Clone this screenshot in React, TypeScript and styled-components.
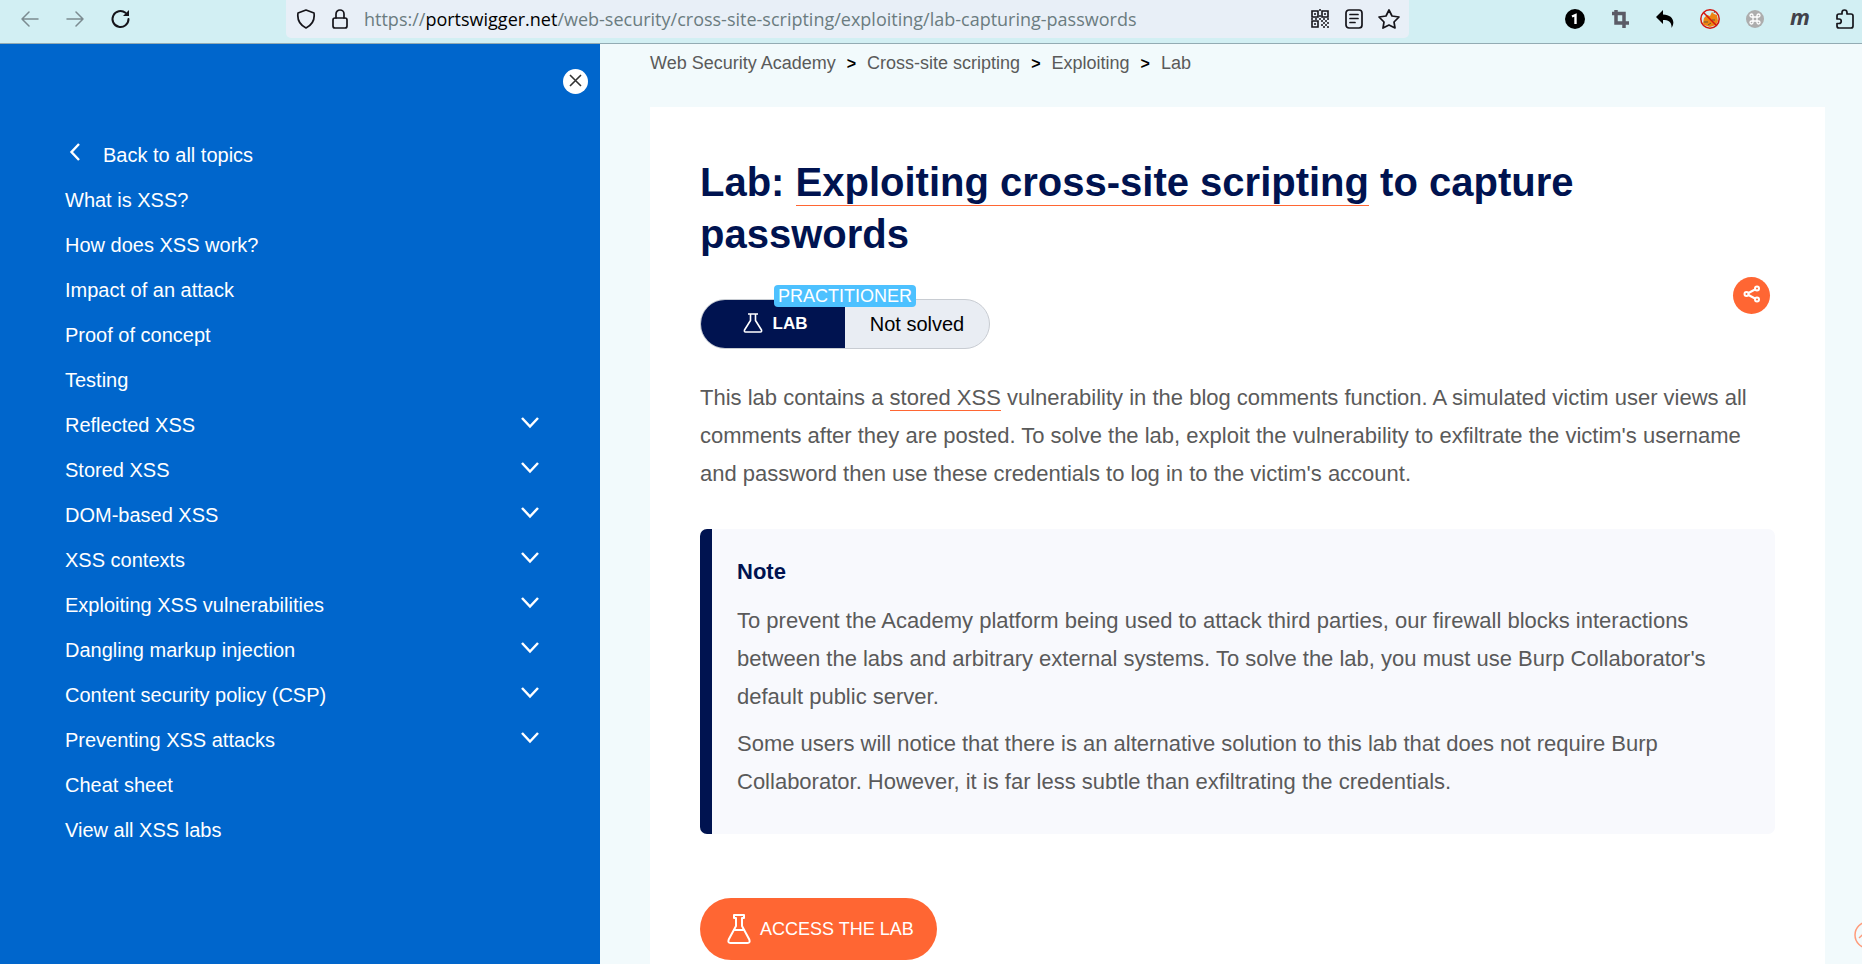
import React from "react";
import styled, { createGlobalStyle } from "styled-components";

const navy = "#001350";
const orange = "#ff6633";

const GlobalStyle = createGlobalStyle`
  * { box-sizing: border-box; }
  body { margin: 0; background: #f2fafc; font-family: "Liberation Sans", Arial, sans-serif; color: #5a5a5a; }
  h1, h2, p, ul, ol { margin: 0; padding: 0; }
  a { color: inherit; text-decoration: none; }
  button { font: inherit; cursor: pointer; }
  svg { display: block; flex: none; }
`;

const Page = styled.div`
  position: relative;
  display: flex;
  flex-direction: column;
  min-height: 100vh;
  overflow: hidden;
`;

const Toolbar = styled.header`
  display: grid;
  grid-template-columns: minmax(0, 286fr) minmax(0, 1123fr) minmax(0, 453fr);
  height: 44px;
  background: #d2eff3;
  border-bottom: 1px solid #93abb3;
  color: #15141a;
`;

const HistoryButtons = styled.div`
  display: flex;
  align-items: center;
  gap: 25px;
  height: 38px;
  padding-left: 20px;
`;

const ToolButton = styled.button<{ $dim?: boolean }>`
  display: flex;
  flex: none;
  padding: 0;
  border: 0;
  background: none;
  color: inherit;
  opacity: ${(p) => (p.$dim ? 0.45 : 1)};
`;

const AddressBar = styled.div`
  display: flex;
  align-items: center;
  gap: 14px;
  height: 38px;
  padding: 0 9px 0 10px;
  background: #e8eff7;
  border-radius: 0 0 5px 5px;
`;

const Address = styled.div`
  flex: 1;
  overflow: hidden;
  font: 18px/24px "Open Sans", "Noto Sans", sans-serif;
  white-space: nowrap;
  color: #6b7c80;
  b { font-weight: 400; color: #000; }
`;

const Extensions = styled.div`
  display: flex;
  align-items: center;
  justify-content: flex-end;
  gap: 25px;
  height: 38px;
  padding-right: 7px;
`;

const MIcon = styled.span`
  width: 20px;
  height: 20px;
  font: italic 700 22px/15px "Open Sans", sans-serif;
  color: #42424a;
`;

const Body = styled.div`
  display: flex;
  flex: 1;
`;

const Sidebar = styled.aside`
  display: flex;
  flex: none;
  flex-direction: column;
  width: 600px;
  padding: 25px 12px 0 0;
  background: #0066cc;
  color: #fff;
`;

const CloseButton = styled.button`
  display: flex;
  align-self: flex-end;
  align-items: center;
  justify-content: center;
  width: 25px;
  height: 25px;
  padding: 0 0 2px;
  border: 0;
  border-radius: 50%;
  background: #fff;
  color: #333;
`;

const TopicList = styled.ul`
  margin: 38px 49px 0 65px;
  list-style: none;
`;

const Topic = styled.a`
  display: flex;
  align-items: center;
  height: 45px;
  font-size: 20px;
  line-height: 24px;
`;

const TopicRow = styled.li`
  display: flex;
  align-items: center;
  justify-content: space-between;
`;

const BackIcon = styled.span`
  width: 38px;
  padding: 0 0 6px 4px;
`;

const ExpandButton = styled.button`
  padding: 0 0 4px;
  border: 0;
  background: none;
  color: #fff;
`;

const Main = styled.main`
  display: flex;
  flex: 1;
  flex-direction: column;
  min-width: 0;
  padding: 7px 37px 0 50px;
`;

const Crumbs = styled.ol`
  display: flex;
  list-style: none;
  font-size: 18px;
  line-height: 24px;
  li + li::before { content: ">"; padding: 0 11px; color: #000; font-weight: 700; font-size: 16px; }
`;

const Card = styled.article`
  flex: 1;
  margin-top: 31px;
  padding: 49px 50px 5px;
  background: #fff;
`;

const Title = styled.h1`
  max-width: 960px;
  font-size: 40px;
  line-height: 52px;
  color: ${navy};
`;

const Underlined = styled.a`
  border-bottom: 1px solid ${orange};
`;

const TitleLink = styled(Underlined)`
  padding-bottom: 1px;
`;

const StatusRow = styled.div`
  display: flex;
  justify-content: space-between;
  align-items: flex-start;
  padding: 17px 5px 0 0;
`;

const Status = styled.div`
  position: relative;
  display: flex;
  width: 290px;
  height: 50px;
  margin-top: 22px;
  border: 1px solid #c8ccd2;
  border-radius: 25px;
  background: #e9edf3;
  font-size: 20px;
  line-height: 48px;
  color: #000;
`;

const StatusKind = styled.span`
  display: flex;
  flex: 0 0 50%;
  align-items: center;
  justify-content: center;
  gap: 10px;
  padding-left: 4px;
  border-radius: 24px 0 0 24px;
  background: ${navy};
  color: #fff;
  font-size: 17px;
  font-weight: 700;
`;

const StatusText = styled.span`
  flex: 1;
  text-align: center;
`;

const Level = styled.span`
  position: absolute;
  top: -15px;
  left: 50%;
  width: 142px;
  margin-left: -71px;
  border-radius: 4px;
  background: #4dc1ff;
  color: #fff;
  font-size: 18px;
  line-height: 22px;
  text-align: center;
`;

const ShareButton = styled.button`
  display: flex;
  align-items: center;
  justify-content: center;
  width: 37px;
  height: 37px;
  padding: 0 0 3px;
  border: 0;
  border-radius: 50%;
  background: ${orange};
  color: #fff;
`;

const Paragraph = styled.p`
  font-size: 22px;
  line-height: 38px;
`;

const Intro = styled(Paragraph)`
  margin-top: 30px;
`;

const Note = styled.section`
  margin-top: 36px;
  padding: 24px 25px 33px;
  border-left: 12px solid ${navy};
  border-radius: 7px;
  background: #f8f9fd;
  ${Paragraph} + ${Paragraph} { margin-top: 9px; }
`;

const NoteTitle = styled.h2`
  margin-bottom: 11px;
  font-size: 22px;
  line-height: 38px;
  color: ${navy};
`;

const AccessButton = styled.a`
  display: inline-flex;
  align-items: center;
  gap: 9px;
  height: 62px;
  margin-top: 64px;
  padding: 0 23px 0 27px;
  border-radius: 31px;
  background: ${orange};
  color: #fff;
  font-size: 18px;
`;

const TopButton = styled.a`
  position: absolute;
  right: -20px;
  bottom: 16px;
  color: #ff9b7a;
`;

const Flask = () => (
  <svg width="24" height="30" viewBox="0 0 24 30" fill="none" stroke="currentColor" strokeWidth="2" strokeLinejoin="round">
    <path d="M7 1h10v3h-2v8l7.300 13.500q1.200 3.500-1.800 3.500h-17q-3 0-1.800-3.500L9 12V4H7zM6 16h12" />
  </svg>
);

const SmallFlask = () => (
  <svg width="20" height="22" viewBox="0 0 20 22" fill="none" stroke="currentColor" strokeWidth="1.600" strokeLinejoin="round">
    <path d="M5 1h10M7.500 1v6.500L1.500 17q-.5 2 1 2h15q1.500 0 1-2l-6-9.500V1" />
  </svg>
);

const Chevron = () => (
  <svg width="18" height="12" viewBox="0 0 18 12" fill="none" stroke="currentColor" strokeWidth="2.500">
    <path d="M1 1l8 8.500L17 1" />
  </svg>
);

const stroke = { fill: "none", stroke: "currentColor", strokeWidth: 1.5, strokeLinejoin: "round", strokeLinecap: "round" } as const;

const topics: { name: string; expandable?: boolean }[] = [
  { name: "What is XSS?" },
  { name: "How does XSS work?" },
  { name: "Impact of an attack" },
  { name: "Proof of concept" },
  { name: "Testing" },
  { name: "Reflected XSS", expandable: true },
  { name: "Stored XSS", expandable: true },
  { name: "DOM-based XSS", expandable: true },
  { name: "XSS contexts", expandable: true },
  { name: "Exploiting XSS vulnerabilities", expandable: true },
  { name: "Dangling markup injection", expandable: true },
  { name: "Content security policy (CSP)", expandable: true },
  { name: "Preventing XSS attacks", expandable: true },
  { name: "Cheat sheet" },
  { name: "View all XSS labs" },
];

const crumbs = ["Web Security Academy", "Cross-site scripting", "Exploiting", "Lab"];

function BrowserToolbar() {
  return (
    <Toolbar>
      <HistoryButtons>
        <ToolButton $dim aria-label="Back">
          <svg width="20" height="20" viewBox="0 0 20 20" {...stroke}><path d="M18 10H2M9 3l-7 7 7 7" /></svg>
        </ToolButton>
        <ToolButton $dim aria-label="Forward">
          <svg width="20" height="20" viewBox="0 0 20 20" {...stroke}><path d="M2 10h16M11 3l7 7-7 7" /></svg>
        </ToolButton>
        <ToolButton aria-label="Reload">
          <svg width="22" height="20" viewBox="0 0 22 20" {...stroke} strokeWidth={2}>
            <path d="M18.500 10a8 8 0 1 1-3-6.200" /><path d="M19 1v6h-6z" fill="currentColor" stroke="none" />
          </svg>
        </ToolButton>
      </HistoryButtons>
      <AddressBar>
        <ToolButton aria-label="Tracking protection">
          <svg width="20" height="20" viewBox="0 0 20 20" {...stroke} strokeWidth={1.7}><path d="M10 1l8 3c1 7-2 12-8 15C4 16 1 11 2 4z" /></svg>
        </ToolButton>
        <ToolButton aria-label="Site information">
          <svg width="20" height="20" viewBox="0 0 20 20" {...stroke} strokeWidth={1.7}><rect x="3" y="9" width="14" height="10" rx="2" /><path d="M6 9V5a4 4 0 0 1 8 0v4" /></svg>
        </ToolButton>
        <Address>https://<b>portswigger.net</b>/web-security/cross-site-scripting/exploiting/lab-capturing-passwords</Address>
        <ToolButton aria-label="QR code">
          <svg width="20" height="20" viewBox="0 0 20 20" fill="none" stroke="currentColor" strokeWidth="1.600">
            <path d="M2 2h6v6H2zM12 2h6v6h-6zM2 12h6v6H2z" />
            <path d="M4 5h2M14 5h2M4 15h2M1 10h2M5 10h2M9 1h2M9 7h2M9 10h2M13 10h2M17 10h2M11 12h2M15 12h2M13 14h2M17 14h2M11 16h2M15 16h2M13 18h2M17 18h2" />
          </svg>
        </ToolButton>
        <ToolButton aria-label="Reader view">
          <svg width="20" height="20" viewBox="0 0 20 20" {...stroke} strokeWidth={1.7}><rect x="2" y="1" width="16" height="18" rx="3" /><path d="M6 5.500h8M6 9.500h8M6 13.500h5" /></svg>
        </ToolButton>
        <ToolButton aria-label="Bookmark">
          <svg width="22" height="20" viewBox="0 0 22 20" {...stroke} strokeWidth={1.7}><path d="M11 1l3 6 7 1-5 5 1 6-6-3-6 3 1-6-5-5 7-1z" /></svg>
        </ToolButton>
      </AddressBar>
      <Extensions>
        <ToolButton aria-label="Container tabs">
          <svg width="20" height="20" viewBox="0 0 20 20"><circle cx="10" cy="10" r="10" fill="#000" /><path d="M7 7.500l3.500-1.500V15" fill="none" stroke="#fff" strokeWidth="2.400" /></svg>
        </ToolButton>
        <ToolButton aria-label="Crop">
          <svg width="20" height="20" viewBox="0 0 20 20" fill="none" stroke="#5b5b66" strokeWidth="3.500"><path d="M6 1v13h13M2 4.500h12V19" /></svg>
        </ToolButton>
        <ToolButton aria-label="Undo">
          <svg width="20" height="20" viewBox="0 0 20 20"><path d="M1 8l7-7v4.500c9 0 13 7 8.500 13.500.5-6-3-8-8.500-8V15z" fill="#000" /></svg>
        </ToolButton>
        <ToolButton aria-label="Proxy">
          <svg width="20" height="20" viewBox="0 0 20 20">
            <path d="M4 9l3-3 3 1 2-4 2 2 3 1 1 6-2 4-6 2-6-2-1-2z" fill="#ee8412" />
            <path d="M4 13h4M12 11h3M8 16l3-2M14 4l1-2" stroke="#69543b" />
            <circle cx="10" cy="10" r="9.200" fill="none" stroke="#d2160e" strokeWidth="1.500" />
            <path d="M3.500 3.500l13 13" stroke="#d2160e" strokeWidth="1.500" />
          </svg>
        </ToolButton>
        <ToolButton aria-label="Shortcuts">
          <svg width="20" height="20" viewBox="0 0 20 20"><circle cx="10" cy="10" r="9" fill="#adadad" /><path d="M8 8h4v4H8zM8 8H6.500A1.500 1.500 0 1 1 8 6.500zM12 8V6.500A1.500 1.500 0 1 1 13.500 8zM12 12h1.500a1.500 1.500 0 1 1-1.500 1.500zM8 12v1.500A1.500 1.500 0 1 1 6.500 12z" fill="none" stroke="#fff" strokeWidth="1.300" /></svg>
        </ToolButton>
        <ToolButton aria-label="Extension m"><MIcon>m</MIcon></ToolButton>
        <ToolButton aria-label="Extensions">
          <svg width="20" height="20" viewBox="0 0 20 20" {...stroke} strokeWidth={1.7}><path d="M2 7q0-2 2-2h3V3.500a2.500 2.500 0 0 1 5 0V5h4q2 0 2 2v10q0 2-2 2H4q-2 0-2-2v-2.500h2a2.200 2.200 0 0 0 0-4.500H2z" /></svg>
        </ToolButton>
      </Extensions>
    </Toolbar>
  );
}

export default function App() {
  return (
    <Page>
      <GlobalStyle />
      <BrowserToolbar />
      <Body>
        <Sidebar>
          <CloseButton aria-label="Close menu">
            <svg width="13" height="13" viewBox="0 0 13 13" fill="none" stroke="currentColor" strokeWidth="1.600"><path d="M1 1l11 11M12 1L1 12" /></svg>
          </CloseButton>
          <TopicList>
            <TopicRow>
              <Topic href="#topics">
                <BackIcon><svg width="12" height="18" viewBox="0 0 12 18" fill="none" stroke="currentColor" strokeWidth="2.400"><path d="M10 1L2.500 9l7.500 8" /></svg></BackIcon>
                Back to all topics
              </Topic>
            </TopicRow>
            {topics.map((t) => (
              <TopicRow key={t.name}>
                <Topic href="#topic">{t.name}</Topic>
                {t.expandable && <ExpandButton aria-label={`Expand ${t.name}`}><Chevron /></ExpandButton>}
              </TopicRow>
            ))}
          </TopicList>
        </Sidebar>
        <Main>
          <Crumbs>
            {crumbs.map((c) => <li key={c}><a href="#crumb">{c}</a></li>)}
          </Crumbs>
          <Card>
            <Title>Lab: <TitleLink href="#exploiting">Exploiting cross-site scripting</TitleLink> to capture passwords</Title>
            <StatusRow>
              <Status>
                <StatusKind><SmallFlask />LAB</StatusKind>
                <StatusText>Not solved</StatusText>
                <Level>PRACTITIONER</Level>
              </Status>
              <ShareButton aria-label="Share">
                <svg width="18" height="18" viewBox="0 0 18 18" fill="none" stroke="currentColor" strokeWidth="2"><circle cx="3.500" cy="9" r="2" /><circle cx="14" cy="3.500" r="2" /><circle cx="14" cy="14.500" r="2" /><path d="M5.500 8L12 4.500M5.500 10l6.500 3.500" /></svg>
              </ShareButton>
            </StatusRow>
            <Intro>
              This lab contains a <Underlined href="#stored">stored XSS</Underlined> vulnerability in the blog comments function. A simulated victim user views all comments after they are posted. To solve the lab, exploit the vulnerability to exfiltrate the victim's username and password then use these credentials to log in to the victim's account.
            </Intro>
            <Note>
              <NoteTitle>Note</NoteTitle>
              <Paragraph>To prevent the Academy platform being used to attack third parties, our firewall blocks interactions between the labs and arbitrary external systems. To solve the lab, you must use Burp Collaborator's default public server.</Paragraph>
              <Paragraph>Some users will notice that there is an alternative solution to this lab that does not require Burp Collaborator. However, it is far less subtle than exfiltrating the credentials.</Paragraph>
            </Note>
            <AccessButton href="#lab"><Flask />ACCESS THE LAB</AccessButton>
          </Card>
        </Main>
      </Body>
      <TopButton href="#top" aria-label="Back to top">
        <svg width="28" height="28" viewBox="0 0 28 28" fill="none" stroke="currentColor" strokeWidth="1.500"><circle cx="14" cy="14" r="13" /><path d="M5 17l9-8 9 8" /></svg>
      </TopButton>
    </Page>
  );
}
